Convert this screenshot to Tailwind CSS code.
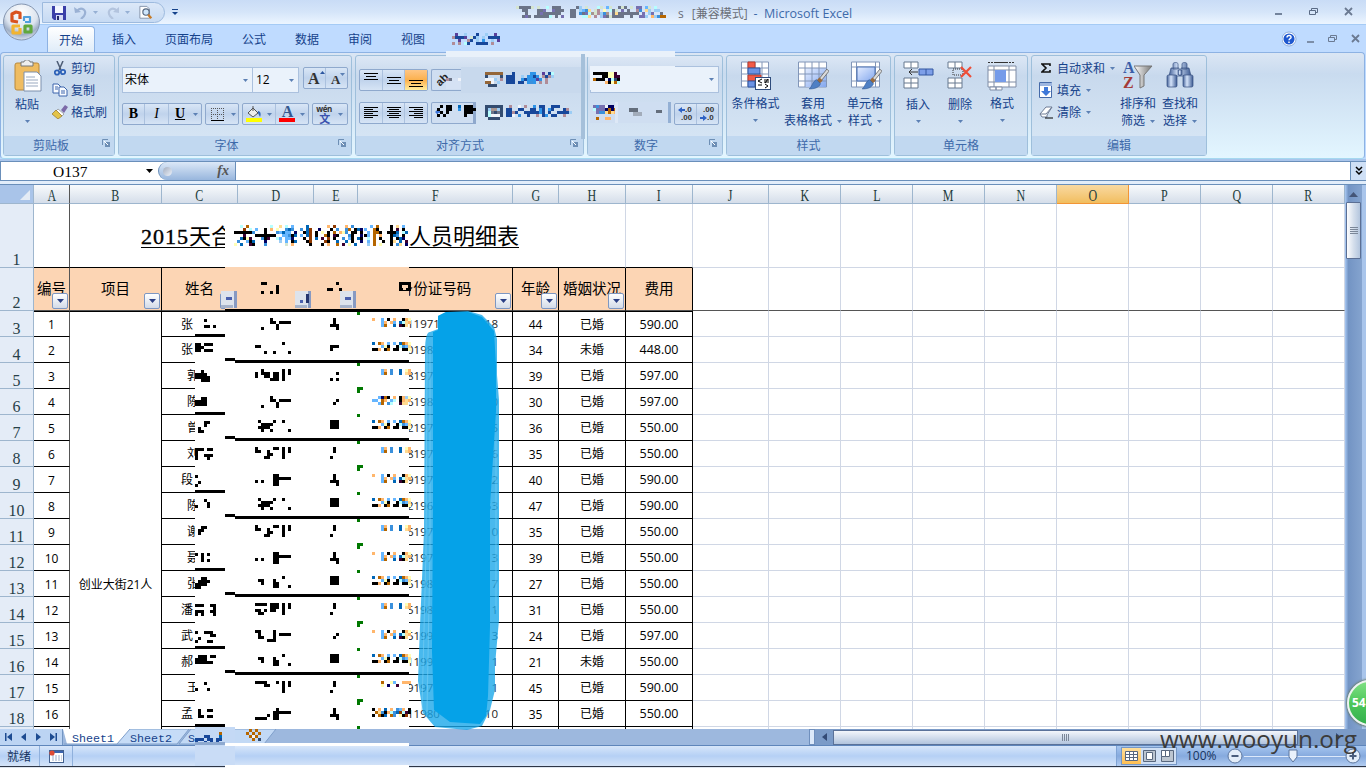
<!DOCTYPE html>
<html lang="zh-CN">
<head>
<meta charset="utf-8">
<title>Microsoft Excel</title>
<script src="https://cdn.jsdelivr.net/npm/@tailwindcss/browser@4"></script>
</head>
<body class="w-[1366px] h-[768px] overflow-hidden bg-[#bfdbff] font-['Open_Sans','Noto_Sans_CJK_SC',sans-serif] text-[12px] leading-none text-[#15428b]">
<div class="relative w-[1366px] h-[768px] overflow-hidden flex flex-col whitespace-nowrap">

<svg width="0" height="0" class="absolute">
  <defs>
    <linearGradient id="gb" x1="0" y1="0" x2="1" y2="1"><stop offset="0" stop-color="#e4edff"/><stop offset="1" stop-color="#84a8ee"/></linearGradient>
    <linearGradient id="metal" x1="0" x2="1"><stop offset="0" stop-color="#fff"/><stop offset="1" stop-color="#777"/></linearGradient>
    <linearGradient id="bin" x1="0" x2="1"><stop offset="0" stop-color="#456299"/><stop offset=".4" stop-color="#d5e4fa"/><stop offset="1" stop-color="#3c5a92"/></linearGradient>
    <radialGradient id="orb" cx=".5" cy=".25" r=".8"><stop offset="0" stop-color="#fff"/><stop offset=".55" stop-color="#dce4ef"/><stop offset=".75" stop-color="#9fafc6"/><stop offset="1" stop-color="#eef4fb"/></radialGradient>
    <symbol id="dn" viewBox="0 0 5 3"><path d="M0 0h5L2.5 3z" fill="#5c80b4"/></symbol>
    <symbol id="launch" viewBox="0 0 8 8"><path d="M.5 6V.5H6" fill="none" stroke="#6e8fb5"/><rect x="3" y="3" width="5" height="5" fill="#6e8fb5"/><path d="M2 2l4 4" stroke="#fff"/></symbol>
    <symbol id="brush" viewBox="0 0 20 22"><path d="M18 2L10 12l2 2L20 4z" fill="#d9d9d9" stroke="#666" stroke-width=".8"/><path d="M11 10l3 3-3 3-3-3z" fill="#9a6b3d"/><path d="M8 12l4 4c-2 4-6 5-11 5 3-2 3-7 7-9z" fill="#4f80c4" stroke="#31578f" stroke-width=".5"/></symbol>
  </defs>
</svg>

<!-- title bar -->
<header class="h-[25px] shrink-0 flex bg-linear-to-b from-[#c9dcf6] via-[#d5e5f9] to-[#ecf5ff] border-b border-[#a5cbf5]">
  <div class="ml-[42px] mt-[2px] w-[123px] h-[21px] rounded-r-full border border-[#9dbade] bg-linear-to-b from-[#dce8f8] to-[#c6daf3] flex items-center pl-[9px]">
    <svg width="14" height="14" viewBox="0 0 14 14"><path d="M0 0h14v14H2l-2-2z" fill="#3a3fa8"/><rect x="3" width="8" height="7" fill="#f3f6ff"/><rect x="4" y="9" width="7" height="5" fill="#d5daf5"/><rect x="5" y="10" width="2" height="4" fill="#222869"/></svg>
    <svg class="ml-[8px]" width="14" height="13" viewBox="0 0 14 13"><path d="M3 5c4-5 11-1 7 5l-3 3" fill="none" stroke="#9ab1d4" stroke-width="2.2"/><path d="M0 1l1 6 6-1z" fill="#9ab1d4"/></svg>
    <svg class="ml-[5px]" width="5" height="3"><use href="#dn" opacity=".5"/></svg>
    <svg class="ml-[8px]" width="14" height="13" viewBox="0 0 14 13"><path d="M11 5C7 0 0 4 4 10l3 3" fill="none" stroke="#b3c4de" stroke-width="2.2"/><path d="M13 1l0 6-6-1z" fill="#b3c4de"/></svg>
    <svg class="ml-[5px]" width="5" height="3"><use href="#dn" opacity=".5"/></svg>
    <svg class="ml-[9px] shrink-0" width="14" height="15" viewBox="0 0 16 15"><path d="M1 .5h8l3 3V14H1z" fill="#fff" stroke="#7d8ba3"/><circle cx="8" cy="7" r="3.6" fill="#cfe6fb" stroke="#56677f" stroke-width="1.3"/><path d="M10.5 10l3.5 4" stroke="#c77b28" stroke-width="2.6"/></svg>
  </div>
  <svg class="ml-[7px] mt-[9px]" width="6" height="7"><path d="M0 .5h6" stroke="#15428b"/><path d="M0 3h6L3 6z" fill="#15428b"/></svg>
  <div class="ml-[500px] mt-[8px] text-[#6b6f78]">s</div>
  <div class="ml-[8px] mt-[8px] text-[#6b6f78]">[兼容模式]</div>
  <div class="ml-[6px] mt-[8px] text-[#3e6aaa] text-[12.500px]">-&nbsp; Microsoft Excel</div>
  <div class="ml-auto mr-[12px] mt-[7px] flex">
    <svg width="80" height="10" viewBox="0 0 80 10" fill="none" stroke="#5a6b85"><path d="M1 7h7" stroke-width="1.6"/><path d="M35.500 3.500h6v4h-6zM37.500 3V1.500h6v4H42" /><path d="M71 1l7 7M78 1l-7 7" stroke-width="1.8" stroke="#6b7a92"/></svg>
  </div>
</header>

<!-- ribbon tabs -->
<nav class="h-[27px] shrink-0 flex items-end bg-[#bfdbff]">
  <div class="ml-[47px] w-[48px] h-[26px] rounded-t-[4px] border border-b-0 border-[#8db2e3] bg-linear-to-b from-white to-[#dfecf9] flex justify-center pt-[8px] shrink-0">开始</div>
  <div class="h-[18px] flex">
    <span class="ml-[17px]">插入</span><span class="ml-[29px]">页面布局</span><span class="ml-[29px]">公式</span><span class="ml-[29px]">数据</span><span class="ml-[29px]">审阅</span><span class="ml-[29px]">视图</span>
  </div>
  <svg class="ml-auto mr-[4px] mb-[5px]" width="80" height="16" viewBox="0 0 80 16" fill="none" stroke="#6b7a92"><circle cx="7" cy="8" r="6.300" fill="#1f58cf" stroke="#fff" stroke-width="1.500"/><circle cx="7" cy="8" r="7" stroke="#6f93cc" stroke-width=".7"/><path d="M5 6.500c0-3 4.500-2.500 4 0-.3 1-2 1.200-2 2.800M7 10.500v1.500" stroke="#fff" stroke-width="1.500"/><path d="M25 11h7" stroke-width="1.600"/><path d="M46.500 6.500h6v4h-6zM48.500 6V4.500h6v4H53"/><path d="M70 4l7 7M77 4l-7 7" stroke-width="1.800"/></svg>
</nav>

<!-- ribbon -->
<section class="h-[107px] shrink-0 mr-[1px] rounded-[4px] border border-[#8db2e3] border-b-[#a5d8f0] bg-linear-to-b from-[#dbe6f4] via-[#c9dbef] via-20% to-[#e3f6ff] flex pt-[2px] pl-[2px] gap-[3px]">

  <div class="w-[112px] h-[101px] rounded-[3px] border border-[#9ebfdb] bg-linear-to-b from-[#dce7f5] via-[#c8d9ed] via-20% to-[#d9e8f6] flex flex-col">
    <div class="flex-1 flex">
      <div class="w-[48px] pt-[4px] pr-[2px] flex flex-col items-center">
        <svg class="ml-[2px]" width="28" height="32" viewBox="0 0 28 32"><rect x="1" y="3" width="24" height="27" rx="2" fill="#efbc61" stroke="#b8883c"/><path d="M7 2h3c0-3 6-3 6 0h3v4H7z" fill="#eee" stroke="#777"/><path d="M10 12h13l4 4v15H10z" fill="#fff" stroke="#7d90ad"/><path d="M12 17h9M12 20h12M12 23h12M12 26h12" stroke="#9aa9bf"/></svg>
        <div class="mt-[7px]">粘贴</div>
        <svg class="mt-[9px]" width="5" height="3"><use href="#dn"/></svg>
      </div>
      <div class="pt-[4px] flex flex-col gap-[6px]">
        <div class="flex items-center h-[16px] gap-[5px]"><svg class="ml-[2px]" width="12" height="15" viewBox="0 0 12 15"><path d="M3 0l4 9M9 0L5 9" stroke="#4d5c74" stroke-width="1.500"/><circle cx="3" cy="11.500" r="2.200" fill="none" stroke="#2d61b8" stroke-width="1.800"/><circle cx="9" cy="11" r="2.200" fill="none" stroke="#2d61b8" stroke-width="1.800"/></svg><span class="pt-px">剪切</span></div>
        <div class="flex items-center h-[16px] gap-[3px]"><svg width="16" height="14" viewBox="0 0 16 14" fill="#f8fbff" stroke="#3d65ac"><path d="M1 1h5l3 3v6H1z"/><path d="M7 4h5l3 3v6H7z"/><path d="M3 4h3M3 6h3M9 8h4M9 10h4"/></svg><span class="pt-px">复制</span></div>
        <div class="flex items-center h-[16px] gap-[3px]"><svg width="16" height="14" viewBox="0 0 16 14"><path d="M9 5l4-5 3 2-4 6z" fill="#7c6aa8"/><path d="M6 4l6 5-2 2-6-5z" fill="#fff" stroke="#777" stroke-width=".6"/><path d="M4 5l6 6-4 3-6-5z" fill="#e3c44a" stroke="#93742a" stroke-width=".7"/></svg><span class="pt-px">格式刷</span></div>
      </div>
    </div>
    <div class="h-[19px] bg-[#c1d8f0] text-[#3e6aaa] flex items-center"><span class="w-[94px] text-center">剪贴板</span><svg class="ml-[4px] mb-[5px]" width="8" height="8"><use href="#launch"/></svg></div>
  </div>

  <div class="w-[234px] h-[101px] rounded-[3px] border border-[#9ebfdb] bg-linear-to-b from-[#dce7f5] via-[#c8d9ed] via-20% to-[#d9e8f6] flex flex-col">
    <div class="flex-1 px-[3px] pt-[11px]">
      <div class="flex">
        <div class="w-[131px] h-[26px] border border-[#abc1de] bg-[#eaf2fb] text-black flex items-center justify-between pl-[2px] pr-[4px]">宋体<svg width="5" height="3"><use href="#dn"/></svg></div>
        <div class="w-[46px] h-[26px] border border-l-0 border-[#abc1de] bg-[#eaf2fb] text-black flex items-center justify-between pl-[3px] pr-[4px]">12<svg width="5" height="3"><use href="#dn"/></svg></div>
        <div class="ml-[4px] w-[45px] h-[22px] border border-[#8fa9cd] rounded-[2px] bg-linear-to-b from-[#d9e6f6] via-[#c0d3ec] to-[#d6e4f5] flex text-[#333] font-['Liberation_Serif'] font-bold">
          <div class="w-[22px] border-r border-[#abc1de] flex pl-[4px] pt-[3px] text-[16px]">A<svg width="5" height="3"><path d="M0 3h5L2.500 0z" fill="#2c56a0"/></svg></div>
          <div class="flex pl-[5px] pt-[5px] text-[13px]">A<svg width="5" height="3"><use href="#dn"/></svg></div>
        </div>
      </div>
      <div class="flex mt-[10px] text-black font-['Liberation_Serif']">
        <div class="w-[80px] h-[22px] border border-[#8fa9cd] rounded-[2px] bg-linear-to-b from-[#d9e6f6] via-[#c0d3ec] to-[#d6e4f5] flex items-center text-[14px]">
          <b class="w-[22px] h-[20px] pt-[3px] border-r border-[#abc1de] text-center">B</b><i class="w-[24px] h-[20px] pt-[3px] border-r border-[#abc1de] text-center">I</i><u class="w-[22px] font-bold text-center">U</u><svg class="ml-[2px]" width="5" height="3"><use href="#dn"/></svg>
        </div>
        <div class="ml-[3px] w-[35px] h-[22px] border border-[#8fa9cd] rounded-[2px] bg-linear-to-b from-[#d9e6f6] via-[#c0d3ec] to-[#d6e4f5] flex items-center pl-[5px]"><svg width="13" height="13" viewBox="0 0 13 13"><path d="M.5 0v12M6.500 0v12M12.500 0v12M0 .5h13M0 6.500h13" stroke="#555" stroke-dasharray="1 1"/><path d="M0 12.500h13" stroke="#000"/></svg><svg class="ml-[7px]" width="5" height="3"><use href="#dn"/></svg></div>
        <div class="ml-[3px] w-[67px] h-[22px] border border-[#8fa9cd] rounded-[2px] bg-linear-to-b from-[#d9e6f6] via-[#c0d3ec] to-[#d6e4f5] flex items-center">
          <svg class="ml-[3px]" width="16" height="16" viewBox="0 0 16 16"><path d="M2 7l5-5 5 5-5 4z" fill="#eee" stroke="#555"/><path d="M7 0v5" stroke="#555"/><path d="M12 5c3 0 3 4 2 6l-2-4z" fill="#3167ba"/><rect y="12" width="16" height="4" fill="#ff0"/></svg><svg class="ml-[5px]" width="5" height="3"><use href="#dn"/></svg>
          <div class="ml-[3px] h-[20px] border-l border-[#abc1de] pl-[3px]"><div class="text-[16px] font-bold text-[#34588f] text-center h-[14px] leading-[16px]">A</div><div class="w-[16px] h-[4px] bg-[#f00]"></div></div><svg class="ml-[5px]" width="5" height="3"><use href="#dn"/></svg>
        </div>
        <div class="ml-[3px] w-[36px] h-[22px] border border-[#8fa9cd] rounded-[2px] bg-linear-to-b from-[#d9e6f6] via-[#c0d3ec] to-[#d6e4f5] flex items-center pl-[3px]"><div class="w-[17px] font-['Open_Sans','Noto_Sans_CJK_SC']"><div class="text-[8px] h-[8px] leading-[7px] tracking-[-.3px] font-bold text-[#333]">wén</div><div class="text-[11px] leading-[12px] h-[11px] text-center text-[#3b52ae] font-bold">文</div></div><svg class="ml-[5px]" width="5" height="3"><use href="#dn"/></svg></div>
      </div>
    </div>
    <div class="h-[19px] bg-[#c1d8f0] text-[#3e6aaa] flex items-center"><span class="w-[215px] text-center">字体</span><svg class="ml-[4px] mb-[5px]" width="8" height="8"><use href="#launch"/></svg></div>
  </div>

  <div class="w-[229px] h-[101px] rounded-[3px] border border-[#9ebfdb] bg-linear-to-b from-[#dce7f5] via-[#c8d9ed] via-20% to-[#d9e8f6] flex flex-col">
    <div class="flex-1 pt-[13px] pl-[3px]">
      <div class="flex">
        <div class="w-[69px] h-[22px] border border-[#8fa9cd] rounded-[2px] bg-linear-to-b from-[#d9e6f6] via-[#c0d3ec] to-[#d6e4f5] flex">
          <svg class="border-r border-[#abc1de]" width="23" height="20"><path d="M4 3.500h14M6 6.500h10M4 9.500h14" stroke="#000"/></svg>
          <svg class="border-r border-[#abc1de]" width="23" height="20"><path d="M4 7.500h14M6 10.500h10M4 13.500h14" stroke="#000"/></svg>
          <svg class="bg-linear-to-b from-[#ffc683] via-[#fbb04b] to-[#ffed9d]" width="22" height="20"><path d="M4 10.500h14M6 13.500h10M4 16.500h14" stroke="#000"/></svg>
        </div>
        <div class="ml-[3px] w-[30px] h-[22px] border border-r-0 border-[#8fa9cd] rounded-l-[2px] bg-[#cfdef1] flex items-center pl-[4px]"><div class="w-[11px] h-[11px] text-[11px] leading-[11px] font-['Liberation_Sans'] font-bold text-[#222] -rotate-45">ab</div></div>
      </div>
      <div class="flex mt-[11px]">
        <div class="w-[69px] h-[22px] border border-[#8fa9cd] rounded-[2px] bg-linear-to-b from-[#d9e6f6] via-[#c0d3ec] to-[#d6e4f5] flex">
          <svg class="border-r border-[#abc1de]" width="23" height="20"><path d="M4 4.500h14M4 6.500h9M4 8.500h14M4 10.500h9M4 12.500h14M4 14.500h9" stroke="#000"/></svg>
          <svg class="border-r border-[#abc1de]" width="23" height="20"><path d="M4 4.500h14M6 6.500h10M4 8.500h14M6 10.500h10M4 12.500h14M6 14.500h10" stroke="#000"/></svg>
          <svg width="22" height="20"><path d="M4 4.500h14M9 6.500h9M4 8.500h14M9 10.500h9M4 12.500h14M9 14.500h9" stroke="#000"/></svg>
        </div>
        <div class="ml-[3px] w-[45px] h-[22px] border border-[#8fa9cd] border-r-[3px] rounded-l-[2px] bg-[#cfdef1]"><svg width="20" height="20"><path d="M3 9l3-3v2h3v2H6v2z" fill="#3e74d6"/></svg></div>
      </div>
    </div>
    <div class="h-[19px] bg-[#c1d8f0] text-[#3e6aaa] flex items-center"><span class="w-[208px] text-center">对齐方式</span><svg class="ml-[6px] mb-[5px]" width="8" height="8"><use href="#launch"/></svg></div>
  </div>

  <div class="w-[136px] h-[101px] rounded-[3px] border border-[#9ebfdb] bg-linear-to-b from-[#dce7f5] via-[#c8d9ed] via-20% to-[#d9e8f6] flex flex-col">
    <div class="flex-1 pt-[10px] pl-[2px]">
      <div class="w-[129px] h-[27px] border border-[#abc1de] bg-[#eaf2fb] flex items-center justify-end pr-[4px]"><svg width="5" height="3"><use href="#dn"/></svg></div>
      <div class="mt-[10px] ml-[84px] w-[45px] h-[22px] border border-[#8fa9cd] rounded-[2px] bg-linear-to-b from-[#d9e6f6] via-[#c0d3ec] to-[#d6e4f5] flex text-[8px] font-['Liberation_Sans'] font-bold text-[#333] leading-[8px]">
        <div class="w-[22px] border-r border-[#abc1de] pt-[2px] pl-[3px]"><div class="flex"><svg width="7" height="8"><path d="M0 4l4-3v2h3v2H4v2z" fill="#2e62c4"/></svg>.0</div><div class="pl-[3px]">.00</div></div>
        <div class="pt-[2px] pl-[3px]"><div class="pl-[3px]">.00</div><div class="flex"><svg width="7" height="8"><path d="M7 4L3 1v2H0v2h3v2z" fill="#2e62c4"/></svg>.0</div></div>
      </div>
    </div>
    <div class="h-[19px] bg-[#c1d8f0] text-[#3e6aaa] flex items-center"><span class="w-[116px] text-center">数字</span><svg class="ml-[5px] mb-[5px]" width="8" height="8"><use href="#launch"/></svg></div>
  </div>

  <div class="w-[165px] h-[101px] rounded-[3px] border border-[#9ebfdb] bg-linear-to-b from-[#dce7f5] via-[#c8d9ed] via-20% to-[#d9e8f6] flex flex-col">
    <div class="flex-1 flex pt-[5px]">
      <div class="w-[57px] flex flex-col items-center">
        <svg width="30" height="29" viewBox="0 0 30 29"><path d="M.5 1h27v25H.5zM7 1v25M14 1v25M21 1v25M0 7h28M0 13h28M0 20h28" fill="#fff" stroke="#8296b8"/><path d="M7 1h7v6H7zM7 14h13v6H7z" fill="#f25a47" stroke="#b83a2c"/><path d="M7 7h12v6H7zM7 20h7v6H7z" fill="#6c93e4" stroke="#2d559f"/><rect x="14.500" y="16.500" width="15" height="12" fill="#fff" stroke="#2f4c7c"/><path d="M21 18l-4 2 4 2M17 24h4M23 19h5M23 21h5M27 18l-3 4M24 23l3 2-3 2" fill="none" stroke="#000"/></svg>
        <div class="mt-[8px]">条件格式</div><svg class="mt-[9px]" width="5" height="3"><use href="#dn"/></svg>
      </div>
      <div class="w-[58px] flex flex-col items-center">
        <svg width="31" height="29" viewBox="0 0 31 29"><path d="M.5 1h28v25H.5z" fill="#fff" stroke="#8296b8"/><path d="M7 7h21v19H7z" fill="url(#gb)"/><path d="M7 1v25M14 1v25M21 1v25M0 7h28M0 13h28M0 20h28" stroke="#8296b8"/><use href="#brush" x="10" y="6" width="21" height="23"/></svg>
        <div class="mt-[8px]">套用</div><div class="mt-[5px] flex items-center gap-[5px]">表格格式<svg width="5" height="3"><use href="#dn"/></svg></div>
      </div>
      <div class="w-[46px] flex flex-col items-center">
        <svg class="ml-[2px]" width="31" height="29" viewBox="0 0 31 29"><path d="M.5 1h28v25H.5zM0 6h28M0 20h28M5.500 1v25M24.500 1v25" fill="#fff" stroke="#8296b8"/><path d="M6 6h18v14H6z" fill="url(#gb)" stroke="#4b71b3"/><use href="#brush" x="10" y="6" width="21" height="23"/></svg>
        <div class="mt-[8px]">单元格</div><div class="mt-[5px] flex items-center gap-[5px]">样式<svg width="5" height="3"><use href="#dn"/></svg></div>
      </div>
    </div>
    <div class="h-[19px] bg-[#c1d8f0] text-[#3e6aaa] flex items-center justify-center">样式</div>
  </div>

  <div class="w-[134px] h-[101px] rounded-[3px] border border-[#9ebfdb] bg-linear-to-b from-[#dce7f5] via-[#c8d9ed] via-20% to-[#d9e8f6] flex flex-col">
    <div class="flex-1 flex pt-[5px] pl-[2px]">
      <div class="w-[42px] flex flex-col items-center">
        <svg class="shrink-0" width="31" height="29" viewBox="0 0 31 29"><path d="M1 1h14v6H1zM8 1v6M1 17h14v10H1zM8 17v10M1 22h14" fill="#fff" stroke="#66788f"/><path d="M16 8h14v6H16zM23 8v6" fill="#7e9fe8" stroke="#3257a0"/><path d="M6 11h9M9 8l-3 3 3 3" fill="none" stroke="#333"/></svg>
        <div class="mt-[9px]">插入</div><svg class="mt-[9px]" width="5" height="3"><use href="#dn"/></svg>
      </div>
      <div class="w-[42px] flex flex-col items-center">
        <svg width="26" height="29" viewBox="0 0 26 29"><path d="M1 1h14v6H1zM8 1v6M1 17h14v10H1zM8 17v10M1 22h14" fill="#fff" stroke="#66788f"/><path d="M6 8h10v6H6z" fill="none" stroke="#333" stroke-dasharray="1 1"/><path d="M14 6l10 10M24 6L14 16" stroke="#ee4e38" stroke-width="2.200"/></svg>
        <div class="mt-[9px]">删除</div><svg class="mt-[9px]" width="5" height="3"><use href="#dn"/></svg>
      </div>
      <div class="w-[42px] flex flex-col items-center">
        <svg width="31" height="30" viewBox="0 0 31 30"><path d="M1 1.500h26" stroke="#333" stroke-dasharray="2 1"/><path d="M9 1.500h10" stroke="#333"/><path d="M1 5h28v21H1zM7 5v21M22 5v21M1 9h28M1 21h28" fill="#fff" stroke="#7f8ca5"/><path d="M8 9h11v12H8z" fill="#759be9"/><path d="M3 26h6v3H3zM9 26h6v3H9z" fill="#fff" stroke="#7f8ca5"/></svg>
        <div class="mt-[7px]">格式</div><svg class="mt-[9px]" width="5" height="3"><use href="#dn"/></svg>
      </div>
    </div>
    <div class="h-[19px] bg-[#c1d8f0] text-[#3e6aaa] flex items-center justify-center">单元格</div>
  </div>

  <div class="w-[176px] h-[101px] rounded-[3px] border border-[#9ebfdb] bg-linear-to-b from-[#dce7f5] via-[#c8d9ed] via-20% to-[#d9e8f6] flex flex-col">
    <div class="flex-1 flex pl-[7px]">
      <div class="w-[78px] pt-[4px] flex flex-col gap-[6px]">
        <div class="h-[16px] flex items-center"><svg class="mr-[6px] ml-[2px]" width="10" height="10" viewBox="0 0 10 10"><path d="M9 3V1H1l4 4-4 4h8V7" fill="none" stroke="#111" stroke-width="1.600"/></svg><span class="pt-px">自动求和</span><svg class="ml-[5px]" width="5" height="3"><use href="#dn"/></svg></div>
        <div class="h-[16px] flex items-center"><svg class="mr-[4px]" width="14" height="16" viewBox="0 0 14 16"><path d="M.5 .5h12v15H.5z" fill="#fff" stroke="#456aa9"/><path d="M1 1h12v3H1z" fill="#9db6e0"/><path d="M5 5h4v4h3l-5 5-5-5h3z" fill="#3e78d8"/></svg><span class="pt-px">填充</span><svg class="ml-[5px]" width="5" height="3"><use href="#dn"/></svg></div>
        <div class="h-[16px] flex items-center"><svg class="mr-[4px]" width="14" height="13" viewBox="0 0 14 13"><path d="M1 8l6-7h6L8 9v2H3z" fill="#fff" stroke="#6e7c96"/><path d="M1 8h6l6-7" fill="none" stroke="#6e7c96"/><path d="M6 12h8" stroke="#000"/></svg><span class="pt-px">清除</span><svg class="ml-[5px]" width="5" height="3"><use href="#dn"/></svg></div>
      </div>
      <div class="w-[42px] pt-[5px] flex flex-col items-center">
        <div class="flex w-[30px] h-[29px] shrink-0">
          <div class="w-[11px] flex flex-col font-['Liberation_Serif'] font-bold text-[16px] leading-[14px]"><span class="text-[#3b5fa8] h-[15px]">A</span><span class="text-[#a33a38]">Z</span></div>
          <svg width="19" height="29" viewBox="11 0 19 29"><path d="M11 5h18l-8 9v11l-4 2V14z" fill="url(#metal)" stroke="#777"/></svg>
        </div>
        <div class="mt-[8px]">排序和</div><div class="mt-[5px] flex items-center gap-[5px]">筛选<svg width="5" height="3"><use href="#dn"/></svg></div>
      </div>
      <div class="w-[42px] pt-[5px] flex flex-col items-center">
        <svg width="28" height="29" viewBox="0 0 28 29" fill="url(#bin)" stroke="#354f80" stroke-width=".7"><path d="M7 3c0-2 5-2 5 0v5H7zM16 3c0-2 5-2 5 0v5h-5zM5 7h8l1 8H3zM15 7h8l2 8H14z"/><path d="M12 9h4v5h-4z"/><rect x="1" y="14" width="10" height="12" rx="1.500"/><rect x="17" y="14" width="10" height="12" rx="1.500"/></svg>
        <div class="mt-[8px]">查找和</div><div class="mt-[5px] flex items-center gap-[5px]">选择<svg width="5" height="3"><use href="#dn"/></svg></div>
      </div>
    </div>
    <div class="h-[19px] bg-[#c1d8f0] text-[#3e6aaa] flex items-center justify-center">编辑</div>
  </div>
</section>

<!-- formula bar -->
<div class="h-[26px] shrink-0 pt-[2px] bg-[#a9c5eb]">
  <div class="h-[20px] flex border-y border-[#6a8fba] bg-white">
    <div class="w-[158px] border-l border-[#6a8fba] flex items-center text-black font-['Liberation_Serif'] text-[15.500px] pt-[2px]"><span class="ml-[52px] w-[35px]">O137</span><svg class="ml-[58px] mb-[2px]" width="7" height="4"><path d="M0 0h7L3.500 4z" fill="#000"/></svg></div>
    <div class="w-[78px] bg-linear-to-b from-[#dce8f7] to-[#98b6dd] rounded-l-[10px] border-l border-r border-[#6a8fba] flex items-center justify-between pl-[4px] pr-[6px]"><span class="w-[9px] h-[9px] rounded-full bg-linear-to-br from-[#a3adbf] to-[#eef3fb]"></span><i class="font-['Liberation_Serif'] font-bold text-[14px] text-[#555]">fx</i></div>
    <div class="flex-1"></div>
    <div class="w-[16px] border-l border-[#6a8fba] bg-[#cfe0f6] flex items-center justify-center"><svg width="8" height="10" fill="none" stroke="#000" stroke-width="1.500"><path d="M1 1l3 3 3-3M1 5l3 3 3-3"/></svg></div>
  </div>
  <div class="h-[4px] bg-[#e2edfa] border-b border-[#6a8fba]"></div>
</div>

<!-- sheet area -->
<main class="h-[544px] shrink-0 flex bg-white">
  <div id="sheet" class="w-[1345px] h-[544px] overflow-hidden flex flex-col text-black"></div>
  <div class="w-[21px] bg-[#a9c5eb] pr-[4px]">
    <div class="h-full bg-linear-to-r from-[#a9c9f3] via-[#7394c4] via-20% to-[#85a4cf] flex flex-col items-center">
      <svg class="mt-[7px]" width="9" height="5"><path d="M0 5h9L4.500 0z" fill="#445577"/></svg>
      <div class="mt-[5px] w-[15px] h-[57px] rounded-[1px] border border-[#5b6f94] bg-linear-to-r from-[#fdfdfe] via-[#d5dfec] to-[#b4c6de] flex items-center justify-center"><svg width="8" height="7"><path d="M0 .5h8M0 2.500h8M0 4.500h8M0 6.500h8" stroke="#7b8798"/></svg></div>
    </div>
  </div>
</main>

<!-- sheet tab strip -->
<div class="h-[17px] shrink-0 flex bg-[#9db8de] border-b border-[#5f86bb] text-[#15428b]">
  <div class="w-[63px] bg-[#bcd4f3] border-r border-[#7295c3] flex items-center"><svg class="ml-[5px]" width="52" height="8" fill="#1d4b91"><path d="M0 0h1.500v8H0zM7 0v8L2 4zM21 0v8l-5-4zM31 0v8l5-4zM45 0v8l5-4zM50.500 0H52v8h-1.500z"/></svg></div>
  <svg width="220" height="17" viewBox="0 0 220 17"><path d="M128 0h85l-12 15h-85z" fill="#c2d9f5" stroke="#7f9fca"/><path d="M64 0h62l-12 15H50z" fill="#c6dcf7" stroke="#7f9fca"/><path d="M0 0h67L54 15H4z" fill="#fff"/><path d="M1 15h53L67 0" fill="none" stroke="#7f9fca"/><g font-family="Liberation Mono" font-size="11.670" fill="#15428b"><text x="9" y="12.500">Sheet1</text><text x="67" y="12.500">Sheet2</text><text x="125" y="12.500">S</text></g></svg>
  <div class="ml-auto w-[6px] bg-[#dce9fa] border border-[#6f8fbd]"></div>
  <div class="w-[551px] bg-[#7b9bc8] flex items-center">
    <svg class="ml-[7px]" width="5" height="8"><path d="M5 0v8L0 4z" fill="#334a75"/></svg>
    <div class="ml-[6px] w-[465px] h-[15px] border border-[#5b7299] bg-linear-to-b from-[#f3f6fb] to-[#b2c4dd] flex items-center justify-center"><svg width="8" height="7"><path d="M.5 0v7M2.500 0v7M4.500 0v7M6.500 0v7" stroke="#7b8798"/></svg></div>
    <svg class="ml-[38px]" width="5" height="8"><path d="M0 0v8l5-4z" fill="#334a75"/></svg>
  </div>
</div>

<!-- status bar -->
<footer class="h-[20px] shrink-0 flex items-center bg-linear-to-b from-[#d7e6fa] via-[#b5d0f5] to-[#d5e4f8] text-[#15335f]">
  <span class="ml-[7px] pt-[2px]">就绪</span>
  <div class="ml-[8px] h-[20px] w-[34px] border-x border-[#8fb0dc] flex items-center pl-[9px]"><svg width="15" height="13" viewBox="0 0 15 13"><rect x=".5" y=".5" width="14" height="12" fill="#fff" stroke="#44618f"/><path d="M1 1h13v2H1z" fill="#3a63ae"/><path d="M3 6h10M3 8h10M3 10h10" stroke="#9cadc9" stroke-dasharray="2 1"/><circle cx="3" cy="3" r="2.600" fill="#e04b33"/></svg></div>
  <div class="ml-auto w-[250px] h-[20px] border-l border-[#7fa3d4] bg-linear-to-b from-[#a6c6f0] via-[#86aade] to-[#b2cdf1] flex items-center">
    <div class="ml-[4px] w-[56px] h-[18px] border border-[#7597c6] bg-[#cfdff4] flex items-center">
      <div class="w-[19px] h-[16px] bg-linear-to-b from-[#ffdf9a] to-[#ffbf50] flex items-center justify-center"><svg width="13" height="10"><path d="M.5 .5h12v9H.5zM4.500 0v10M8.500 0v10M0 3.500h13M0 6.500h13" fill="#fff" stroke="#58677e"/></svg></div>
      <svg class="ml-[2px]" width="13" height="12"><path d="M.5 .5h12v11H.5z" fill="#bcc5d0" stroke="#58677e"/><path d="M3.500 2.500h6v7h-6z" fill="#fff" stroke="#58677e"/></svg>
      <svg class="ml-[5px]" width="13" height="12"><path d="M.5 .5h12v11H.5z" fill="#bcc5d0" stroke="#58677e"/><path d="M.5 .5h4v6h-4zM4.500 .5h4v6h-4z" fill="#fff" stroke="#58677e"/></svg>
    </div>
    <span class="ml-[9px] w-[40px]">100%</span>
    <svg width="138" height="18" viewBox="0 0 138 18"><path d="M18 9.500h102" stroke="#dce9fb"/><circle cx="9" cy="9" r="7" fill="#e3edf9" stroke="#5c769f"/><path d="M5.500 9h7" stroke="#4a5d7c" stroke-width="2"/><path d="M63 3h8v7l-4 5-4-5z" fill="#e9f1fb" stroke="#5c769f"/><circle cx="127" cy="9" r="7" fill="#e3edf9" stroke="#5c769f"/><path d="M123.500 9h7M127 5.500v7" stroke="#4a5d7c" stroke-width="2"/></svg>
  </div>
</footer>
<div class="h-[2px] shrink-0 bg-[#dfe6ef] border-t border-[#2d3545]"></div>

<!-- office button -->
<svg class="absolute left-[2px] top-[2px]" width="40" height="40" viewBox="0 0 40 40"><circle cx="19.500" cy="20" r="18" fill="url(#orb)" stroke="#8495b0"/><g fill="none" stroke-width="3.200" stroke-linejoin="round"><path d="M18 17v-6l-4-1-4 2v7l6 1" stroke="#d9521f"/><path d="M22 19v-4h6v5h-5" stroke="#4f9fdc" stroke-width="2.200"/><path d="M18 24h-7v7h7v-5" stroke="#f2b430"/><path d="M23 24h6v6h-6z" stroke="#5fa83c"/></g></svg>

<!-- pixelated overlay -->
<svg id="mosaic" class="absolute left-0 top-0 pointer-events-none" width="1366" height="768" shape-rendering="crispEdges"></svg>

<!-- marker stroke -->
<svg class="absolute left-[410px] top-[305px]" width="95" height="430" viewBox="410 305 95 430">
  <path d="M425 352q0-20 5-20l8-3V316l8-4 22-1 14 4 12 12 3 12v36l2 25v220l-4 45v25l-5 20-8 16-15 4-32-3-12-14-5-32 2-55 4-95z" fill="#1aa8ea" fill-opacity=".8"/>
  <path d="M433 332l5-2v-14l8-4h22l14 5 12 14 2 35v45l-6 95v120l-2 70-2 20-6 8-30-2-16-12-2-58 1-150z" fill="#05a2e8"/>
  <g stroke="#7ccff3" stroke-opacity=".6" fill="none"><path d="M427 350l-1 200-4 160M430 350l0 200-3 162M496 440v170"/></g>
</svg>

<!-- floating badge and watermark -->
<div class="absolute left-[1347px] top-[680px] w-[46px] h-[46px] rounded-full border-[2px] border-[#eef3f0] bg-linear-to-b from-[#7fe083] via-[#4cc75a] to-[#35b04e] shadow-[0_0_2px_1px_#6b7f74] flex items-center text-white font-bold pl-[3px]">54</div>
<div class="absolute left-[1160px] top-[727px] text-[24.300px] leading-[24px] text-[#3b3b3b]">www.wooyun.org</div>
</div>

<script>
const cols=[['A',36],['B',92],['C',76],['D',76],['E',44],['F',155],['G',46],['H',67],['I',67],['J',76],['K',72],['L',72],['M',72],['N',72],['O',72],['P',72],['Q',72],['R',72]];
const people=[['张','11971','918',44,'已',590],['张','0198','',34,'未',448],['郭','8197','',39,'已',597],['陈','6198','0',30,'已',597],['曾','2197','015',36,'已',550],['刘','8197','756',35,'已',550],['段','9197','12',40,'已',590],['陈','2196','353',47,'已',590],['谢','6197','10',35,'已',550],['聂','8197','3',39,'已',550],['张','5198','7',27,'已',550],['潘','5198','1',31,'已',550],['武','5199','3',24,'已',597],['郝','1199','1',21,'未',550],['王','9197','1',45,'已',590],['孟','11980','10',35,'已',550]];
const nameX=[19,19,25,25,25,25,19,25,25,25,25,19,19,19,25,19];
const filter='<span class="absolute right-[1px] bottom-[1px] w-[16px] h-[16px] rounded-[2px] border border-[#7d97c2] bg-linear-to-b from-white to-[#d3dbe8] flex items-center justify-center"><svg width="7" height="4"><path d="M0 0h7L3.500 4z" fill="#2b3f85"/></svg></span>';
const num=(n,h)=>`<div style="height:${h}px" class="w-[34px] shrink-0 bg-[#e4ecf7] border-r border-b border-[#9eb6ce] text-[#274048] font-['Liberation_Serif'] text-[16px] leading-[15px] flex items-end justify-center">${n}</div>`;
let h='<div class="flex h-[19px] shrink-0"><div class="w-[34px] shrink-0 bg-[#a9c4e9] border-r border-b border-[#9eb6ce] flex items-end justify-end p-[3px]"><svg width="10" height="10"><path d="M10 0v10H0z" fill="#e3ebf5"/></svg></div>';
for(const [c,w] of cols){
  h+=`<div style="width:${w}px" class="shrink-0 border-r border-b flex items-center justify-center pt-[3px] font-['Liberation_Serif'] text-[16px] text-[#1e3c3c] ${c==='O'?'bg-linear-to-b from-[#f9d9a0] to-[#f1be5e] border-[#f29536]':c==='A'?'bg-linear-to-b from-[#f8fafc] to-[#d5deea] border-b-[#9eb6ce] border-r-[#555]':'bg-linear-to-b from-[#f8fafc] to-[#d5deea] border-[#9eb6ce]'}"><span class="scale-x-[.75]">${c}</span></div>`;
}
h+='</div>';
const tail=cls=>cols.slice(9).map(c=>`<div style="width:${c[1]}px" class="shrink-0 border-r border-b border-[#d0d7e5] ${cls}"></div>`).join('');
h+=`<div class="flex h-[64px] shrink-0">${num(1,64)}<div class="w-[36px] shrink-0 border-r border-r-[#555] border-b border-b-black"></div><div class="w-[556px] shrink-0 border-r border-r-[#d0d7e5] border-b border-b-black flex items-center pt-[2px] font-['Liberation_Serif','Noto_Sans_CJK_SC'] text-[22px] leading-[22px]"><span class="ml-[71px] w-[268px] underline underline-offset-[3px] decoration-1"><span class="tracking-[1px] [-webkit-text-stroke:.4px_black]">2015</span>天合</span><span class="underline underline-offset-[3px] decoration-1">人员明细表</span></div><div class="w-[67px] shrink-0 border-r border-r-[#d0d7e5] border-b border-b-black"></div>${tail('')}</div>`;
h+=`<div class="flex h-[43px] shrink-0">${num(2,43)}`;
['编号','项目','姓名','','','身份证号码','年龄','婚姻状况','费用'].forEach((t,i)=>{h+=`<div style="width:${cols[i][1]}px" class="relative shrink-0 bg-[#fcd5b4] border-r border-b border-b-[#555] ${i===0?'border-r-[#555]':'border-r-black'} flex items-center justify-center overflow-hidden pt-[1px] text-[14.500px]">${t}${'012567'.includes(i)?filter:''}</div>`});
h+=tail('border-b-[#555]')+'</div>';
people.forEach((p,i)=>{
  const t=i===0?'border-t border-t-black':'';
  h+=`<div class="flex h-[26px] shrink-0">${num(i+3,26)}
  <div class="w-[36px] shrink-0 border-r border-r-[#555] border-b border-b-black flex items-center justify-center pt-[2px] ${t}">${i+1}</div>
  <div class="w-[92px] shrink-0 border-r border-black flex items-center justify-center pt-[1px] ${t}">${i===10?'创业大街21人':''}</div>
  <div class="w-[76px] shrink-0 border-b border-black flex items-center pt-[1px] ${t}"><span style="margin-left:${nameX[i]}px">${p[0]}</span></div>
  <div class="w-[76px] shrink-0"></div><div class="w-[44px] shrink-0"></div>
  <div class="w-[155px] shrink-0 border-r border-b border-black flex items-center justify-between pl-[49px] pr-[14px] text-[11.500px] text-[#222] ${t}"><span>${p[1]}</span><span>${p[2]}</span></div>
  <div class="w-[46px] shrink-0 border-r border-b border-black flex items-center justify-center pt-[2px] ${t}">${p[3]}</div>
  <div class="w-[67px] shrink-0 border-r border-b border-black flex items-center justify-center pt-[1px] ${t}">${p[4]}婚</div>
  <div class="w-[67px] shrink-0 border-r border-b border-black flex items-center justify-center pt-[2px] text-[12.500px] ${t}">${p[5]}.00</div>${tail('')}</div>`;
});
h+=`<div class="flex h-[26px] shrink-0"><div class="w-[34px] shrink-0 bg-[#e4ecf7] border-r border-[#9eb6ce]"></div><div class="w-[36px] shrink-0 border-r border-[#555]"></div><div class="w-[92px] shrink-0 border-r border-black"></div><div class="w-[351px] shrink-0 border-r border-black"></div><div class="w-[46px] shrink-0 border-r border-black"></div><div class="w-[67px] shrink-0 border-r border-black"></div><div class="w-[67px] shrink-0 border-r border-black"></div>${tail('')}</div>`;
document.getElementById('sheet').innerHTML=h;

const P={k:'#000','#':'#000',o:'#ffb66c',b:'#66b6ff',B:'#0066b6',s:'#3a90dc',m:'#3a0030',y:'#ffffb6',Y:'#ffdb90',c:'#b6ffff',n:'#b66600',r:'#903a00',d:'#000060',g:'#6b7488',G:'#d5e5d0',l:'#9ccdf5',p:'#7670b0',a:'#a8958f',N:'#17479a',v:'#593e9a',w:'#f0f4fa',q:'#b08c98',t:'#2e94e8',R:'#946638',D:'#334c70'};
let s='';
const rect=(x,y,w,hh,f)=>s+=`<rect x="${x}" y="${y}" width="${w}" height="${hh}" fill="${f}"/>`;
const draw=(x,y,rows,cw=3,ch=3)=>rows.forEach((r,j)=>[...r].forEach((c,i)=>{if(P[c])rect(x+i*cw,y+j*ch,cw,ch,P[c])}));

rect(225,204,184,63,'#fff');rect(225,267,184,43,'#fcd5b4');
rect(195,312,30,417,'#fff');rect(225,310,184,419,'#fff');rect(225,309,184,3,'#000');
for(let i=0;i<6;i++)rect(195,334+78*i,30,3,'#000');
for(let i=0;i<5;i++){rect(225,358+78*i,10,3,'#000');rect(235,360+78*i,174,3,'#000');rect(357,363+78*i,3,3,'#007800');rect(357,387+78*i,3,6,'#007800');rect(357,387+78*i,6,3,'#007800');rect(357,414+78*i,3,3,'#007800')}
rect(357,312,3,3,'#007800');
const D={a:['.....#......','.....##.####','.......#....','..#....#....'],b:['.........#..','##..........','............','...#..#....#'],c:['..#......#.#','#.###.##.#.#','#..##.##.#..','.....###.#..'],d:['.#....#..#..','..####......','.####.......','..#..#.....#'],e:['#.....##.#.#','##..#....#.#','....##...#..','...##....#..'],f:['......##....','......######','#.#...##....','......##....'],g:['.........#..','.##...#.....','..#...##....','......##...#'],h:['####.###.#.#','.....###.#.#','##.#.##..#..','.##......#..'],i:['##....#.....','.#....#.####','.##...#.....','....###.....'],j:['####...#.#.#','...##....#.#','.........#..','.........#..'],k:['.......#....','......######','....#.##....','####..##....']};
const E={a:['.#.','.#.','###','..#'],b:['...','###','#..'],c:['...','..#','...','#.#'],d:['...','..#','.#.'],f:['###','###','###'],e:['.#.','.#.','...','#..']};
const F={a:['o..b.k.o..koy','...bo.ob.BcYo','...bn..B.mkY.'],b:['B.no.b.b.Bnoy','...byk..kcsbY','kko.kn.kk.kky'],c:['...bo.s..B.yo','...bn.s..B.Yo'],d:['..bdnk.o.koly','bb.no.bc.koYo','..bn.sc..mYY.'],e:['...n..yb..ooo','...y.d..m....'],f:['k.o.B.o.sbo.k','.nYskocsBrcmk','k.nkB.ns.ykr.']};
const C=[['...#','','...##.#'],['##.###','###','##.###'],['..#','####','#####','..###'],['..##','####','####'],['...##','...#','.#','.##'],['###.##','#','#..###','#...#'],['#','','.#','#'],['...#','....#','#...#'],['..##','.##','.#'],['#.#.#','..#','..#.#'],['..##','.####','####','##'],['###..##','......#','###..##','#.#...#'],['#..###','.....##','.#','#...##'],['.###.##','####','######'],['...#','','#...#'],['.#..##','.#','.##.##']];
const dk='abcadefdefghigjk',ek='abcdfeafeafedfea',fk='abcdbcabcabcabef';
const dy=[318,342,369,396,420,447,474,498,525,552,576,603,630,654,681,708];
dy.forEach((y,i)=>{draw(255,y,D[dk[i]]);draw(330,y,E[ek[i]]);draw(372,y,F[fk[i]]);draw(195,y+1,C[i])});
// title glyph blocks
const T=[
['..c.n..','...r.c.','kkkkkks','...m...','..Bkym.','.s..bkB','y.B..mk'],
['.....c.','b..k.o.','...k...','kkkkkkk','..skm..','...d...','...s...'],
['.Y.c.b.','y..sBs.','sbBbb.d','..bbskB','cb.bbd.','.l.b.kB','...G.o.'],
['..B....','s.Br..d','.kBr.k.','b.Br.k.','.k.r.B.','..kr...','...k...'],
['..o.r..','...k.s.','y.k.n.o','.nk.mk.','m.r.k..','.rk..B.','k.o..n.'],
['.o.s...','.sn.kBd','ys.kk.k','..sk..d','s.bk.Bk','.B.k..d','m.y.B..'],
['..b.n..','b..nk..','.b.nnk.','kb.n.o.','.c.n.k.','.b.n..k','.l.n.y.'],
['.k.Y.b.','.k.m.k.','kkkB.cB','.kBs.k.','.k.kBd.','.kY.B.m','.k.sY.d']];
[234,255,276,300,321,342,364,387].forEach((x,i)=>draw(x,225,T[i]));
// header row blocks
draw(261,282,['##....','.....#','.....#','#..#.#']);draw(327,282,['...#.','','##..#']);
draw(399,282,['####','#..#','####']);rect(403,288,3,2,'#fcd5b4');
// half-covered filter buttons
[[221,0],[295,1],[340,0]].forEach(([x,k])=>{rect(x,291,16,17,'#dde3ec');rect(x+13,291,3,17,'#879ac2');rect(x,305,12,3,'#a7b4cc');k?(rect(x+5,300,3,3,'#4b61ae'),rect(x+11,294,3,9,'#26366f')):rect(x+5,297,6,3,'#4b61ae')});
// caption and ribbon
draw(516,6,['GggggG.G..c.ggg.....gl.G...cG.bG..gGg.G.pp.bG.c',
'..gg...ggp..pggg..gg.lbsY.Gq.y.cgG.p.g..qs.Yl.ll',
'...g...gpgggggg...gg.sgpcaGqlsa.gYggggggg.p.lp..g',
'..gpg.gggggc.g.p..gg..ccY.q.lpgGgggg..g..ppl.olsnn']);
draw(452,33,['.v..l...N..l..v.','qNNNv.GNl.l.NNNN','..v..qN.l.t..l.v','q.q.cN..NNNN.q..']);
rect(446,51,229,6,'#e9f1fa');rect(461,67,120,26,'#c8d9ed');
draw(485,72,['RRRRRR','D....D','wwwl.q','RRw.l.','.DDD..']);
draw(506,72,['..N.....tt..v.Nc','NNN..l.ttNt.qNql','NNN..tNtttvt.q..','NNN.NN.tst.q.q..']);
rect(446,78,15,11,'#d5e2f4');draw(446,78,['qg..w']);
rect(446,105,6,18,'#cfdef1');draw(437,105,['.k.kk..B.kkk','k..kk..t.kkkk','.k.k.....kkk','k.k......k..']);
draw(485,105,['DDDDDD','DlaalD','DcgDgD','DcwwwD','.DDDD.']);
draw(506,105,['.q..w.q..t.NN..NNN..','NN..NN..NN.tN.tN...Nq','NNqN..NNNNNtN.N..NNNNl','NNw.s..N..q.Nt.NN..q..']);
rect(581,54,4,85,'#a5c0da');rect(590,66,85,24,'#eaf2fb');
draw(593,72,['kkkkkyym','...kkyymm','nkkk.dcDk','....okync']);
rect(590,102,83,21,'#cfdef1');
draw(593,105,['psppwdd.','cpppdndn','.pssYnYo','........','.n..oo..']);rect(615,102,3,21,'#dde8f6');rect(629,108,9,4,'#646e7c');rect(633,112,9,4,'#a2acba');rect(656,110,6,3,'#646e7c');rect(668,102,3,21,'#94b0d4');
// sheet tab remnant
rect(195,727,40,19,'#c4d9f5');draw(195,732,['........n.','...NN...B.','NNN.NN.NN.','N..N.N.N..']);rect(195,742,30,3,'#8faad0');
draw(246,729,['.n.n','n.n.n','.nwn','..n.D']);
rect(225,743,184,3,'#fff');rect(195,746,40,20,'#c9dcf6');rect(225,765,184,3,'#fff');
document.getElementById('mosaic').innerHTML=s;
</script>
</body>
</html>
